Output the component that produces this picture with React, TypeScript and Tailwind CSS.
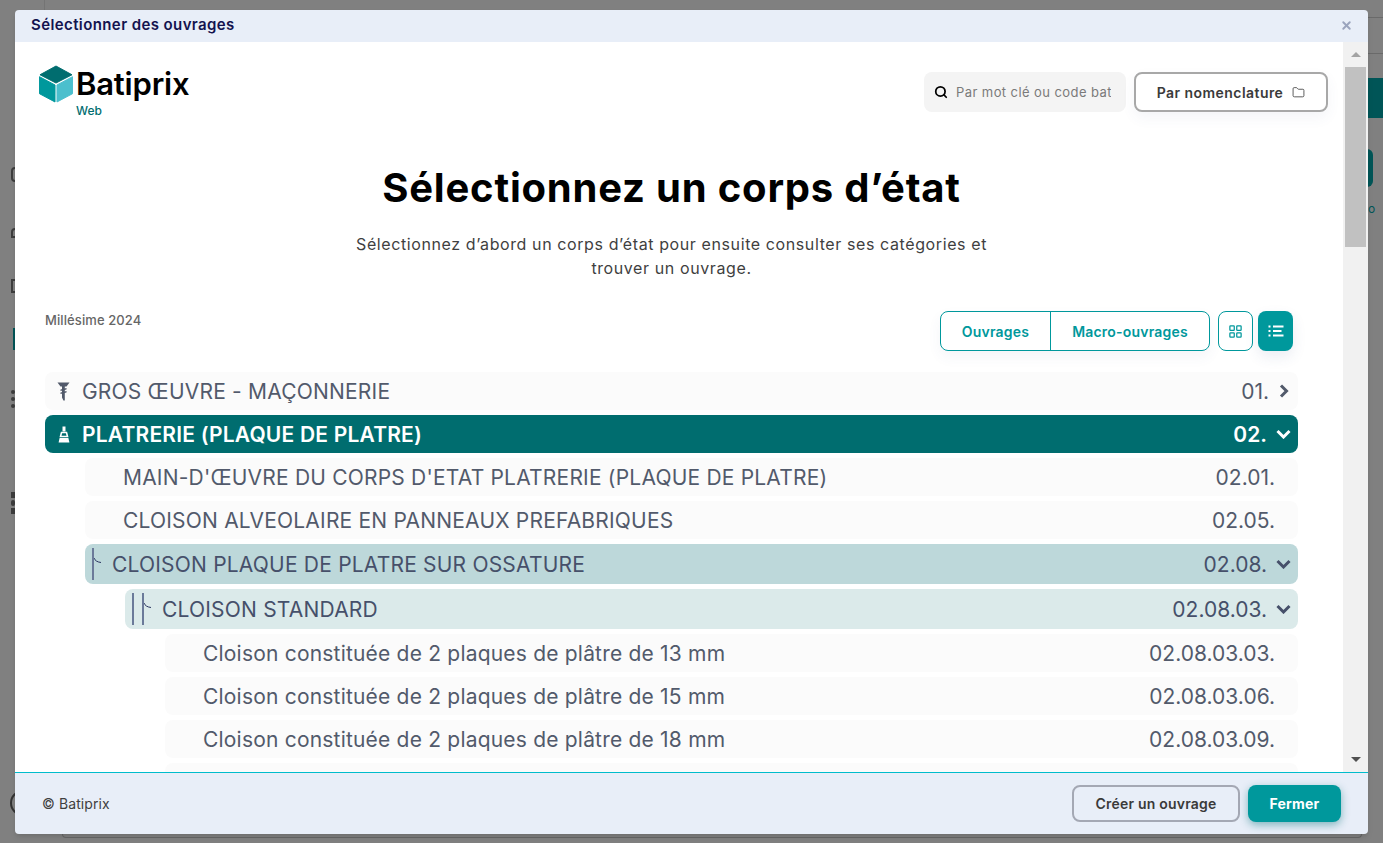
import React from "react";
import { Folder, LayoutGrid, Search, X } from "lucide-react";

interface RowData {
  label: string;
  code: string;
  indent: string;
  open?: boolean;
  closed?: boolean;
  tone: string;
  height: string;
  textLeft: string;
  icon?: React.ReactNode;
  guides?: number;
}

const ScrewIcon = () => (
  <svg width="13" height="19" viewBox="0 0 13 19" fill="#525a6b">
    <path d="M0.500 0.500h12l-3 4H7.800V18.500H6.400l-1.400-3V4.500H3.500z" />
    <path d="M3.500 7.500l6-1.400v1.500l-6 1.400zM3.500 10.500l6-1.400v1.500l-6 1.400z" />
  </svg>
);

const BrushIcon = () => (
  <svg width="12" height="17" viewBox="0 0 12 17" fill="none">
    <path d="M6 0.500v5" stroke="#fff" strokeWidth="3" />
    <path d="M3.500 6.500h5l1 4H2.500z" stroke="#fff" strokeWidth="1.600" />
    <path d="M1.600 12h8.800l1 4.500H0.600z" fill="#fff" />
  </svg>
);

const ChevronRightBold = () => (
  <svg width="10" height="14" viewBox="0 0 10 14" fill="none" className="mr-[9px]">
    <path d="M2 1.500L7.500 7L2 12.500" stroke="currentColor" strokeWidth="3" />
  </svg>
);

const ChevronDownBold = () => (
  <svg width="15" height="10" viewBox="0 0 15 10" fill="none" className="mr-[7px]">
    <path d="M1.500 2L7.500 8L13.500 2" stroke="currentColor" strokeWidth="3" />
  </svg>
);

const TreeGuide = ({ count }: { count: number }) => (
  <span className="flex h-[32px] items-center">
    {Array.from({ length: count }).map((_, index) => (
      <span key={index} className="relative mr-[8px] h-[32px] w-[2px] bg-[#6b7a99]">
        {index === count - 1 && (
          <svg className="absolute left-[2px] top-[9px]" width="8" height="8" viewBox="0 0 8 8" fill="none">
            <path d="M0 1c1 2.500 3 4 7 4.500" stroke="#2a3560" strokeWidth="1" />
          </svg>
        )}
      </span>
    ))}
  </span>
);

const rows: RowData[] = [
  {
    label: "GROS ŒUVRE - MAÇONNERIE",
    code: "01.",
    indent: "ml-0",
    closed: true,
    tone: "bg-[#fbfbfb] text-[#525a6b]",
    height: "h-[38px]",
    textLeft: "pl-[11px]",
    icon: <ScrewIcon />,
  },
  {
    label: "PLATRERIE (PLAQUE DE PLATRE)",
    code: "02.",
    indent: "ml-0",
    open: true,
    tone: "bg-[#006d6f] text-white font-semibold",
    height: "h-[38px]",
    textLeft: "pl-[11px]",
    icon: <BrushIcon />,
  },
  {
    label: "MAIN-D'ŒUVRE DU CORPS D'ETAT PLATRERIE (PLAQUE DE PLATRE)",
    code: "02.01.",
    indent: "ml-[40px]",
    tone: "bg-[#fbfbfb] text-[#525a6b]",
    height: "h-[38px]",
    textLeft: "pl-[38px]",
  },
  {
    label: "CLOISON ALVEOLAIRE EN PANNEAUX PREFABRIQUES",
    code: "02.05.",
    indent: "ml-[40px]",
    tone: "bg-[#fbfbfb] text-[#525a6b]",
    height: "h-[38px]",
    textLeft: "pl-[38px]",
  },
  {
    label: "CLOISON PLAQUE DE PLATRE SUR OSSATURE",
    code: "02.08.",
    indent: "ml-[40px]",
    open: true,
    tone: "bg-[#bdd8da] text-[#46506a]",
    height: "h-[40px]",
    textLeft: "pl-[10px]",
    guides: 1,
  },
  {
    label: "CLOISON STANDARD",
    code: "02.08.03.",
    indent: "ml-[80px]",
    open: true,
    tone: "bg-[#dbeaea] text-[#46506a]",
    height: "h-[40px]",
    textLeft: "pl-[10px]",
    guides: 2,
  },
  {
    label: "Cloison constituée de 2 plaques de plâtre de 13 mm",
    code: "02.08.03.03.",
    indent: "ml-[120px]",
    tone: "bg-[#fbfbfb] text-[#525a6b]",
    height: "h-[38px]",
    textLeft: "pl-[38px]",
  },
  {
    label: "Cloison constituée de 2 plaques de plâtre de 15 mm",
    code: "02.08.03.06.",
    indent: "ml-[120px]",
    tone: "bg-[#fbfbfb] text-[#525a6b]",
    height: "h-[38px]",
    textLeft: "pl-[38px]",
  },
  {
    label: "Cloison constituée de 2 plaques de plâtre de 18 mm",
    code: "02.08.03.09.",
    indent: "ml-[120px]",
    tone: "bg-[#fbfbfb] text-[#525a6b]",
    height: "h-[38px]",
    textLeft: "pl-[38px]",
  },
  {
    label: "",
    code: "",
    indent: "ml-[120px]",
    tone: "bg-[#fbfbfb] text-[#525a6b]",
    height: "h-[38px]",
    textLeft: "pl-[38px]",
  },
];

const Row = ({ row }: { row: RowData }) => {
  return (
    <div className={`flex shrink-0 items-center rounded-lg ${row.indent} ${row.height} ${row.tone}`}>
      {row.icon && <span className="flex w-[37px] justify-end pr-[12px]">{row.icon}</span>}
      {row.guides && (
        <span className="pl-[7px]">
          <TreeGuide count={row.guides} />
        </span>
      )}
      <span className={`flex-1 pt-[1px] text-[21px] tracking-[0.2px] whitespace-nowrap ${row.icon ? "pl-0" : row.textLeft}`}>
        {row.label}
      </span>
      <span className={`pt-[1px] text-[21px] ${row.open ? "pr-[9px]" : row.closed ? "pr-[10px]" : "pr-[23px]"}`}>
        {row.code}
      </span>
      {row.closed && <ChevronRightBold />}
      {row.open && <ChevronDownBold />}
    </div>
  );
};

const Logo = () => (
  <div className="flex items-start pl-[1px]">
    <svg width="34" height="38" viewBox="0 0 35 38">
      <path d="M17.500 0.500L34 9.500L17.500 18L1 9.500z" fill="#006d6f" stroke="#006d6f" strokeLinejoin="round" />
      <path d="M0.500 11.500L16.500 20V37.500L0.500 29z" fill="#00989c" stroke="#00989c" strokeLinejoin="round" />
      <path d="M34.500 11.500L18.500 20V37.500L34.500 29z" fill="#4bbfcd" stroke="#4bbfcd" strokeLinejoin="round" />
    </svg>
    <div className="ml-[3px] flex flex-col">
      <span className="text-[31px] leading-[38px] font-semibold tracking-[-0.2px] text-black">Batiprix</span>
      <span className="pt-[1px] text-[12px] leading-[14px] font-medium text-[#006d6f]">Web</span>
    </div>
  </div>
);

export default function App() {
  return (
    <div className="relative h-[843px] w-full overflow-hidden bg-[#808080] font-['Inter',sans-serif]">
      {/* Page behind the overlay, the modal covers most of it */}
      <div className="absolute left-0 top-0 h-[10px] w-[45px] border-r border-[#747474]" />
      <div className="absolute right-0 top-[17px] h-[37px] w-[15px] border-y border-[#6a6a6a]" />
      <div className="absolute right-0 top-[78px] h-[40px] w-[15px] bg-[#005557]" />
      <div className="absolute left-[1350px] top-[149px] h-[38px] w-[23px] rounded-r-md bg-[#005557]" />
      <span className="absolute left-[1368px] top-[200px] text-[12px] text-[#005557]">o</span>
      <div className="absolute left-[11px] top-[167px] h-[15px] w-[8px] rounded-sm border-2 border-[#3d3d3d]" />
      <div className="absolute left-[11px] top-[228px] h-[10px] w-[8px] rounded-t-full border-2 border-[#3d3d3d]" />
      <div className="absolute left-[11px] top-[279px] h-[14px] w-[8px] border-2 border-[#3d3d3d]" />
      <div className="absolute left-[13px] top-[328px] h-[22px] w-[4px] bg-[#005557]" />
      <div className="absolute left-[11px] top-[390px] flex flex-col gap-[3px]">
        <span className="h-[4px] w-[4px] rounded-full bg-[#3d3d3d]" />
        <span className="h-[4px] w-[4px] rounded-full bg-[#3d3d3d]" />
        <span className="h-[4px] w-[4px] rounded-full bg-[#3d3d3d]" />
      </div>
      <div className="absolute left-[11px] top-[492px] flex flex-col gap-[2px]">
        <span className="h-[6px] w-[4px] bg-[#3d3d3d]" />
        <span className="h-[6px] w-[4px] rounded-full bg-[#3d3d3d]" />
        <span className="h-[6px] w-[4px] bg-[#3d3d3d]" />
      </div>
      <div className="absolute left-[10px] top-[790px] h-[26px] w-[26px] rounded-full border-2 border-[#333]" />
      <div className="absolute bottom-[5px] left-[62px] h-[4px] w-[1300px] rounded-b border-x border-b border-[#666]" />

      {/* Modal */}
      <div className="relative mt-[10px] ml-[15px] flex h-[824px] w-[1353px] flex-col overflow-hidden rounded-[4px] shadow-md">
        <div className="flex h-[32px] shrink-0 items-center justify-between bg-[#e8eef8] pr-[15px] pb-[2px] pl-[16px]">
          <span className="text-[15px] font-semibold tracking-[0.4px] text-[#13134f]">Sélectionner des ouvrages</span>
          <X size={13} strokeWidth={3.500} className="text-[#9aa3bd]" />
        </div>

        <div className="flex min-h-0 flex-1">
          <div className="min-w-0 flex-1 overflow-hidden bg-white pt-[23px] pr-[15px] pl-[23px]">
            <div className="flex items-start justify-between">
              <Logo />
              <div className="mt-[7px] flex gap-[8px]">
                <div className="flex h-[40px] w-[202px] items-center gap-[8px] overflow-hidden rounded-lg bg-[#f4f4f4] pr-[15px] pl-[10px]">
                  <Search size={14} strokeWidth={3} className="shrink-0 text-black" />
                  <span className="overflow-hidden pt-[1px] text-[13px] tracking-[0.42px] whitespace-nowrap text-[#7a7a7a]">
                    Par mot clé ou code bat
                  </span>
                </div>
                <div className="flex h-[40px] w-[194px] items-center justify-center gap-[9px] rounded-lg border-2 border-[#a8a8a8] bg-white text-[14px] font-semibold tracking-[0.45px] text-[#3a3a3a] shadow-[0_6px_14px_rgba(60,80,140,0.06)]">
                  Par nomenclature
                  <Folder size={13} strokeWidth={1.500} />
                </div>
              </div>
            </div>

            <div className="pr-[30px] pl-[7px]">
              <h1 className="mt-[46px] text-center text-[40px] leading-[48px] font-bold tracking-[0.8px] text-black">
                Sélectionnez un corps d’état
              </h1>
              <p className="mx-auto mt-[20px] w-[660px] text-center text-[16px] leading-[24px] tracking-[0.6px] text-[#3f3f3f]">
                Sélectionnez d’abord un corps d’état pour ensuite consulter ses catégories et
                <br />
                trouver un ouvrage.
              </p>

              <div className="mt-[31px] flex items-start justify-between pr-[5px]">
                <span className="text-[13px] font-medium tracking-[0.1px] text-[#666]">Millésime 2024</span>
                <div className="flex gap-[8px] text-[14px] font-semibold tracking-[0.2px] text-[#00989c]">
                  <div className="flex h-[40px] overflow-hidden rounded-lg border border-[#00989c] bg-white shadow-[0_6px_14px_rgba(60,80,140,0.06)]">
                    <span className="flex w-[110px] items-center justify-center border-r border-[#00989c]">Ouvrages</span>
                    <span className="flex w-[158px] items-center justify-center">Macro-ouvrages</span>
                  </div>
                  <div className="flex gap-[5px]">
                    <span className="flex h-[40px] w-[35px] items-center justify-center rounded-lg border border-[#00989c] bg-white">
                      <LayoutGrid size={15} strokeWidth={2} />
                    </span>
                    <span className="flex h-[40px] w-[35px] items-center justify-center rounded-lg bg-[#00989c] text-white shadow-[0_6px_14px_rgba(60,80,140,0.1)]">
                      <svg width="16" height="12" viewBox="0 0 16 12" stroke="#fff" strokeWidth="1.800" fill="none">
                        <path d="M0.500 1.500h2M5 1.500h10.500M0.500 6h2M5 6h8.500M0.500 10.500h2M5 10.500h10.500" />
                      </svg>
                    </span>
                  </div>
                </div>
              </div>

              <div className="mt-[21px] flex flex-col gap-[5px]">
                {rows.map((row, index) => (
                  <Row key={index} row={row} />
                ))}
              </div>
            </div>
          </div>

          {/* Scrollbar */}
          <div className="flex w-[25px] shrink-0 flex-col items-center bg-[#f1f1f1]">
            <div className="flex h-[25px] items-center">
              <span className="h-0 w-0 border-x-[5px] border-b-[5px] border-x-transparent border-b-[#a3a3a3]" />
            </div>
            <div className="h-[180px] w-[21px] bg-[#c1c1c1]" />
            <div className="flex-1" />
            <div className="flex h-[25px] items-center">
              <span className="h-0 w-0 border-x-[5px] border-t-[5px] border-x-transparent border-t-[#505050]" />
            </div>
          </div>
        </div>

        <div className="flex h-[62px] shrink-0 items-center justify-between border-t border-[#00bccc] bg-[#e8eef8] pr-[27px] pl-[27px]">
          <span className="text-[14px] tracking-[0.1px] text-[#3f3f3f]">© Batiprix</span>
          <div className="flex gap-[8px] text-[14px] font-semibold tracking-[0.2px]">
            <span className="flex h-[37px] w-[168px] items-center justify-center rounded-lg border-2 border-[#a4a8b4] text-[#3a3a3a]">
              Créer un ouvrage
            </span>
            <span className="flex h-[37px] w-[93px] items-center justify-center rounded-lg bg-[#00989c] font-bold text-white shadow-[0_3px_8px_rgba(0,110,120,0.45)]">
              Fermer
            </span>
          </div>
        </div>
      </div>
    </div>
  );
}
